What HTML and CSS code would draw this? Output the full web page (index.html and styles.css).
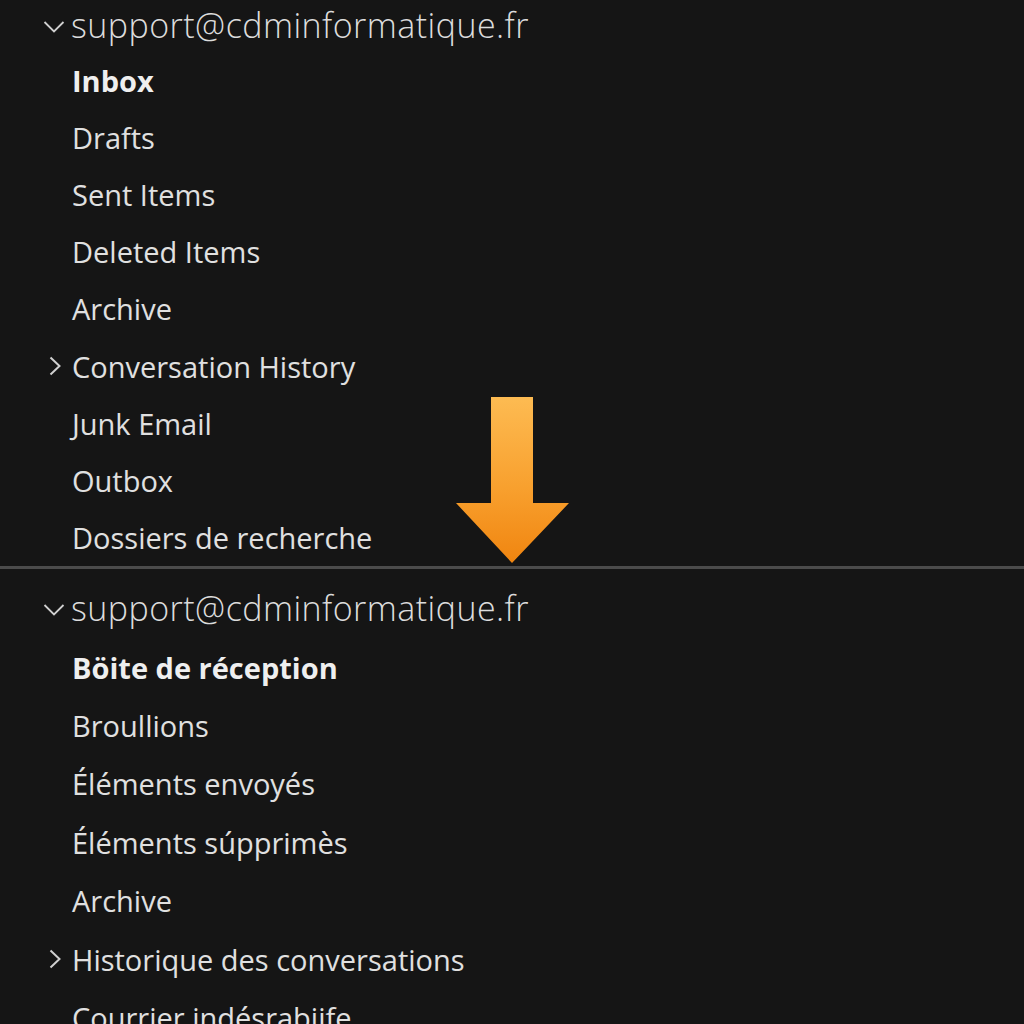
FILE: index.html
```html
<!DOCTYPE html>
<html lang="fr">
<head>
<meta charset="utf-8">
<title>Dossiers</title>
<link rel="stylesheet" href="styles.css">
</head>
<body>
<div class="page">
  <section class="pane pane-top">
    <div class="account">
      <svg class="chev-down" width="22" height="14" viewBox="0 0 22 14"><path d="M1.5 2 L11 11.5 L20.5 2" fill="none" stroke="#d0d0d0" stroke-width="1.8"/></svg>
      <span class="email">support@cdminformatique.fr</span>
    </div>
    <ul class="folders">
      <li class="folder bold">Inbox</li>
      <li class="folder">Drafts</li>
      <li class="folder">Sent Items</li>
      <li class="folder">Deleted Items</li>
      <li class="folder">Archive</li>
      <li class="folder has-sub"><svg class="chev-right" width="14" height="20" viewBox="0 0 14 20"><path d="M2.5 1.5 L11.5 10 L2.5 18.5" fill="none" stroke="#d0d0d0" stroke-width="2"/></svg>Conversation History</li>
      <li class="folder">Junk Email</li>
      <li class="folder">Outbox</li>
      <li class="folder">Dossiers de recherche</li>
    </ul>
  </section>
  <section class="pane pane-bottom">
    <div class="account">
      <svg class="chev-down" width="22" height="14" viewBox="0 0 22 14"><path d="M1.5 2 L11 11.5 L20.5 2" fill="none" stroke="#d0d0d0" stroke-width="1.8"/></svg>
      <span class="email">support@cdminformatique.fr</span>
    </div>
    <ul class="folders folders-fr">
      <li class="folder bold">Böite de réception</li>
      <li class="folder">Broullions</li>
      <li class="folder">Éléments envoyés</li>
      <li class="folder">Éléments súpprimès</li>
      <li class="folder">Archive</li>
      <li class="folder has-sub"><svg class="chev-right" width="14" height="20" viewBox="0 0 14 20"><path d="M2.5 1.5 L11.5 10 L2.5 18.5" fill="none" stroke="#d0d0d0" stroke-width="2"/></svg>Historique des conversations</li>
      <li class="folder">Courrier indésrabiife</li>
    </ul>
  </section>
  <svg class="arrow" width="120" height="170" viewBox="0 0 120 170">
    <defs>
      <linearGradient id="ag" x1="0" y1="0" x2="0" y2="1">
        <stop offset="0" stop-color="#fdbb52"/>
        <stop offset="0.55" stop-color="#f8a02e"/>
        <stop offset="1" stop-color="#f08510"/>
      </linearGradient>
    </defs>
    <path d="M38 2 L80 2 L80 108 L116 108 L59 168 L3 108 L38 108 Z" fill="url(#ag)"/>
  </svg>
</div>
</body>
</html>
```
FILE: styles.css
```css
html, body {
  margin: 0;
  padding: 0;
  background: #151515;
}
body {
  font-family: "Open Sans", "Noto Sans", "DejaVu Sans", sans-serif;
  color: #e2e2e2;
  width: 1024px;
  height: 1024px;
  overflow: hidden;
}
.page {
  position: relative;
  width: 1024px;
  height: 1024px;
}
.pane-top {
  height: 566px;
  border-bottom: 3px solid #4b4b4b;
}
.pane-bottom {
  padding-top: 11px;
}
.account {
  height: 52px;
  display: flex;
  align-items: center;
}
.pane-bottom .account {
  height: 58px;
}
.chev-down {
  margin-left: 43px;
  margin-right: 6px;
  margin-top: 2px;
}
.email {
  font-size: 34px;
  font-weight: 300;
  letter-spacing: 0.45px;
  color: #dcdcdc;
  line-height: 1;
  margin-top: -2px;
}
.folders {
  list-style: none;
  margin: 0;
  padding: 0;
}
.folder {
  height: 57.1px;
  display: flex;
  align-items: center;
  padding-left: 72px;
  font-size: 29px;
  color: #e0e0e0;
  position: relative;
  white-space: nowrap;
}
.folders-fr .folder {
  height: 58.4px;
}
.folder.bold {
  font-weight: 700;
  color: #efefef;
}
.chev-right {
  position: absolute;
  left: 48px;
  top: 50%;
  margin-top: -10px;
}
.arrow {
  position: absolute;
  left: 453px;
  top: 395px;
}
```
